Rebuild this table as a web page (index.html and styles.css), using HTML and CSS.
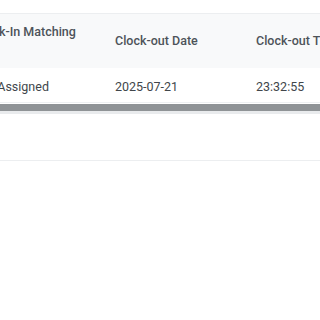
FILE: index.html
```html
<!DOCTYPE html>
<html lang="en">

<head>
    <meta charset="UTF-8">
    <meta name="viewport" content="width=device-width, initial-scale=1.0">
    <title>Clock Records</title>
    <link rel="stylesheet" href="styles.css">
</head>

<body>
    <div class="panel">
        <div class="table-wrap">
            <table class="records">
                <thead>
                    <tr>
                        <th class="col-match">Clock-In Matching No.</th>
                        <th>Clock-out Date</th>
                        <th>Clock-out Time</th>
                    </tr>
                </thead>
                <tbody>
                    <tr>
                        <td>Not Assigned</td>
                        <td>2025-07-21</td>
                        <td>23:32:55</td>
                    </tr>
                </tbody>
            </table>
        </div>
        <div class="scrollbar">
            <div class="thumb"></div>
        </div>
        <div class="panel-footer"></div>
    </div>
</body>

</html>
```

FILE: styles.css
```css
*,
html,
body {
    margin: 0;
    padding: 0;
    box-sizing: border-box;
}

body {
    background-color: #ffffff;
    font-family: Roboto, "Noto Sans", sans-serif;
    color: #495057;
}

.panel {
    padding-top: 13px;
}

.table-wrap {
    overflow: hidden;
}

.records {
    border-collapse: collapse;
    table-layout: fixed;
    width: 423px;
    margin-left: -38px;
}

.records th,
.records td {
    width: 141px;
    padding: 0 12px;
    text-align: left;
    white-space: nowrap;
}

.records th {
    height: 54px;
    background-color: #f8f9fa;
    border-top: 1px solid #eceef0;
    font-size: 12.5px;
    font-weight: 500;
    line-height: 18px;
    color: #4d5359;
}

.records th.col-match {
    white-space: normal;
}

.records td {
    height: 35px;
    padding-top: 4px;
    font-size: 12.5px;
    color: #41464b;
    border-bottom: 1px solid #eef0f2;
}

.scrollbar {
    margin-top: 1px;
    height: 10px;
    background-color: #e9ebed;
    padding-bottom: 3px;
}

.thumb {
    height: 7px;
    background-color: #8f9396;
}

.panel-footer {
    height: 47px;
    border-bottom: 1px solid #eceef0;
}
```
